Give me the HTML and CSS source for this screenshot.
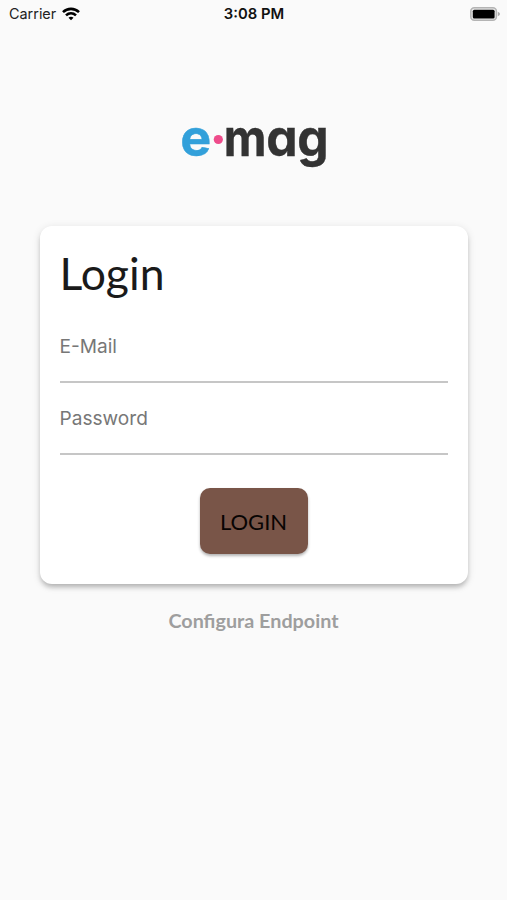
FILE: index.html
```html
<!DOCTYPE html>
<html lang="it">
<head>
<meta charset="utf-8">
<meta name="viewport" content="width=device-width, initial-scale=1">
<title>Login</title>
<link rel="stylesheet" href="styles.css">
</head>
<body>
<header class="status">
  <div class="carrier"><span>Carrier</span>
    <svg class="wifi" width="18" height="14" viewBox="0 0 18 14" fill="none" stroke="#000" stroke-width="2.6"><path d="M1 5.1C5.5.8 12.500.8 17 5.1"/><path d="M4 8.400C6.900 5.700 11.100 5.700 14 8.400"/><path d="M6.500 10.700C8 9.400 10 9.400 11.500 10.700L9 13.300Z" fill="#000" stroke="none"/></svg>
  </div>
  <time class="clock">3:08 PM</time>
  <svg class="battery" width="31" height="14" viewBox="0 0 31 14"><rect x=".8" y=".8" width="25.600" height="12.400" rx="3.500" fill="#e8e8e8" stroke="#b4b4b4" stroke-width="1.500"/><rect x="2.800" y="2.800" width="21.800" height="8.600" rx="1.500"/><path d="M27.800 4.800Q30 5.500 30 7T27.800 9.200Z" fill="#aaa"/></svg>
</header>
<main class="screen">
  <svg class="logo" width="150" height="72" viewBox="0 -20 150 72" role="img" aria-label="e·mag">
    <text class="word blue" x="1.200" y="35.500" textLength="31" lengthAdjust="spacingAndGlyphs">e</text>
    <circle cx="39.300" cy="19.500" r="4.600" fill="#ee4c8b"/>
    <text class="word" x="44.700" y="35.500" textLength="42.800" lengthAdjust="spacingAndGlyphs">m</text>
    <text class="word" x="87.300" y="35.500" textLength="31.400" lengthAdjust="spacingAndGlyphs">a</text>
    <text class="word" x="118.200" y="35.500" textLength="31.400" lengthAdjust="spacingAndGlyphs">g</text>
  </svg>
  <form class="card">
    <h1 class="title">Login</h1>
    <input class="field" type="text" placeholder="E-Mail" aria-label="E-Mail">
    <input class="field" type="password" placeholder="Password" aria-label="Password">
    <button class="submit" type="button">LOGIN</button>
  </form>
  <a class="endpoint">Configura Endpoint</a>
</main>
</body>
</html>
```
FILE: styles.css
```css
* { box-sizing: border-box; }
body { margin: 0; min-height: 900px; background: #fafafa; font-family: Lato, sans-serif; }
.status { display: grid; grid-template-columns: 1fr auto 1fr; align-items: center; height: 27px; padding: 0 6px 0 9px; font-family: Inter, sans-serif; font-size: 14.4px; color: #111; }
.carrier { display: flex; align-items: center; gap: 6px; color: #222; }
.clock { font-weight: 600; font-size: 14.8px; margin-right: 2px; }
.battery { justify-self: end; }
.screen { display: flex; flex-direction: column; align-items: center; padding-top: 73px; }
.logo { display: block; overflow: visible; }
.word { font: 700 52px Inter, sans-serif; font-feature-settings: "cv11" 1; fill: #333; stroke: #333; stroke-width: .4; }
.blue { fill: #32a0da; stroke: #32a0da; }
.card { display: flex; flex-direction: column; width: 428px; height: 358px; margin-top: 54px; padding: 20px; border-radius: 12px; background: #fff; box-shadow: 0 4px 5px -1px rgba(0,0,0,.22), 0 2px 8px rgba(0,0,0,.12); }
.title { margin: 0; height: 55px; line-height: 53px; font-size: 44.5px; font-weight: 400; color: #1a1a1a; }
.field { width: 100%; height: 72px; margin: 0; padding: 0; border: 0; border-bottom: 2px solid #c6c6c6; border-radius: 0; background: none; outline: 0; font: 19.1px Inter, sans-serif; }
.title + .field { margin-top: 10px; }
.field::placeholder { color: #777; opacity: 1; }
.submit { align-self: center; width: 108px; height: 66px; margin-top: 33px; padding: 0; border: 0; border-radius: 10px; background: #795548; color: #080403; font: 22px Lato, sans-serif; box-shadow: 0 2px 3px rgba(0,0,0,.3); }
.endpoint { margin-top: 25px; font-size: 19.75px; line-height: 24px; font-weight: 700; color: #9e9e9e; }
```
